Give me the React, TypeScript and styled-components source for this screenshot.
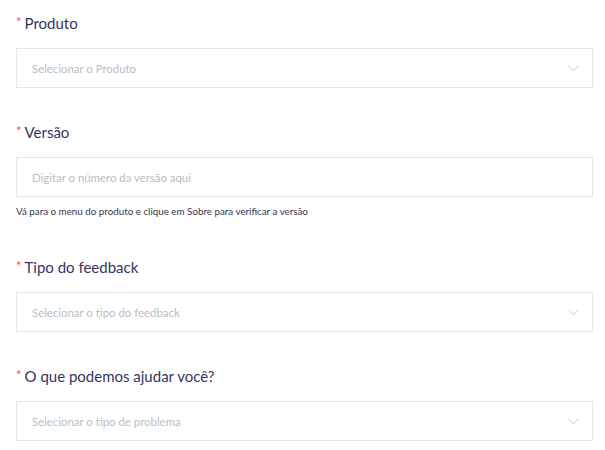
import styled, { createGlobalStyle } from 'styled-components';

const GlobalStyle = createGlobalStyle`
  html, body {
    margin: 0;
    padding: 0;
    background: #ffffff;
  }
  body {
    font-family: Lato, "Noto Sans", "Liberation Sans", sans-serif;
  }
`;

type FieldProps = {
  label: string;
  placeholder: string;
  select?: boolean;
  hint?: string;
};

const Chevron = () => (
  <svg width="11" height="7" viewBox="0 0 11 7" fill="none">
    <path d="M0.5 0.8 L5.5 5.8 L10.5 0.8" stroke="#c3c7cf" strokeWidth="1" />
  </svg>
);

const Field = ({ label, placeholder, select, hint }: FieldProps) => {
  return (
    <Block $hasHint={!!hint}>
      <Label>
        <Star>*</Star>
        {label}
      </Label>
      <Box>
        <Placeholder>{placeholder}</Placeholder>
        {select && <Chevron />}
      </Box>
      {hint && <Hint>{hint}</Hint>}
    </Block>
  );
};

const App = () => {
  return (
    <>
      <GlobalStyle />
      <Form>
        <Field label="Produto" placeholder="Selecionar o Produto" select />
        <Field
          label="Versão"
          placeholder="Digitar o número da versão aqui"
          hint="Vá para o menu do produto e clique em Sobre para verificar a versão"
        />
        <Field label="Tipo do feedback" placeholder="Selecionar o tipo do feedback" select />
        <Field label="O que podemos ajudar você?" placeholder="Selecionar o tipo de problema" select />
      </Form>
    </>
  );
};

const Form = styled.div`
  padding: 12px 0 0 16px;
  width: 577px;
`;

const Block = styled.div<{ $hasHint: boolean }>`
  margin-bottom: ${({ $hasHint }) => ($hasHint ? '38px' : '33px')};
`;

const Label = styled.div`
  display: flex;
  align-items: flex-start;
  height: 22px;
  font-size: 15px;
  line-height: 22px;
  font-weight: 400;
  color: #34365a;
  margin-bottom: 14px;
`;

const Star = styled.span`
  color: #f0505a;
  font-size: 13px;
  line-height: 20px;
  margin-right: 3px;
`;

const Box = styled.div`
  box-sizing: border-box;
  height: 40px;
  border: 1px solid #e6e7ea;
  display: flex;
  align-items: center;
  justify-content: space-between;
  padding: 0 13px 0 15px;
`;

const Placeholder = styled.span`
  font-size: 11.4px;
  color: #b9bdc7;
`;

const Hint = styled.div`
  margin-top: 7px;
  height: 14px;
  font-size: 9.8px;
  line-height: 14px;
  color: #33354a;
`;

export default App;
